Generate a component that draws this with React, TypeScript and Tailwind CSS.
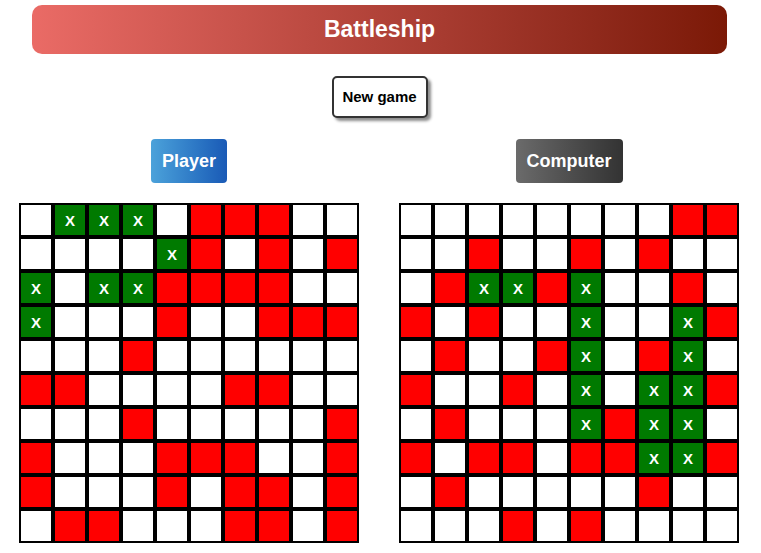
type Cell = "w" | "r" | "x";

const playerBoard: string[] = [
  "wxxxwrrrww",
  "wwwwxrwrwr",
  "xwxxrrrrww",
  "xwwwrwwrrr",
  "wwwrwwwwww",
  "rrwwwwrrww",
  "wwwrwwwwwr",
  "rwwwrrrwwr",
  "rwwwrwrrwr",
  "wrrwwwrrwr",
];

const computerBoard: string[] = [
  "wwwwwwwwrr",
  "wwrwwrwrww",
  "wrxxrxwwrw",
  "rwrwwxwwxr",
  "wrwwrxwrxw",
  "rwwrwxwxxr",
  "wrwwwxrxxw",
  "rwrrwrrxxr",
  "wrwwwwwrww",
  "wwwrwrwwww",
];

function BoardCell({ value }: { value: Cell }) {
  const bg =
    value === "r" ? "bg-[#ff0000]" : value === "x" ? "bg-[#007a00]" : "bg-white";
  return (
    <div
      className={`w-[34px] h-[34px] border-2 border-black flex items-center justify-center text-white font-bold text-[15px] leading-none ${bg}`}
    >
      {value === "x" ? "X" : ""}
    </div>
  );
}

function Board({ rows }: { rows: string[] }) {
  return (
    <div className="grid grid-cols-[repeat(10,34px)] w-[340px]">
      {rows.flatMap((row, r) =>
        row.split("").map((c, i) => <BoardCell key={`${r}-${i}`} value={c as Cell} />)
      )}
    </div>
  );
}

export default function App() {
  return (
    <div className="min-h-[553px] bg-white font-['Liberation_Sans',Arial,sans-serif]">
      <div className="pt-[5px] pl-[32px]">
        <div className="w-[695px] h-[49px] rounded-[10px] bg-gradient-to-r from-[#ea6b66] to-[#7b1906] flex items-center justify-center">
          <h1 className="text-white font-bold text-[23px]">Battleship</h1>
        </div>
      </div>

      <div className="flex justify-center mt-[22px] pr-[2px]">
        <button className="w-[96px] h-[42px] bg-white border-2 border-[#333] rounded-[5px] shadow-[3px_3px_3px_rgba(0,0,0,0.45)] text-black font-bold text-[15px]">
          New game
        </button>
      </div>

      <div className="flex gap-[40px] mt-[21px] pl-[19px]">
        <div className="flex flex-col items-center gap-[20px]">
          <div className="h-[44px] px-[11px] rounded-[4px] bg-gradient-to-r from-[#4ca2da] to-[#1a5ab6] flex items-center text-white font-bold text-[18px]">
            Player
          </div>
          <Board rows={playerBoard} />
        </div>
        <div className="flex flex-col items-center gap-[20px]">
          <div className="h-[44px] px-[11px] rounded-[4px] bg-gradient-to-r from-[#6b6b6b] to-[#333333] flex items-center text-white font-bold text-[18px]">
            Computer
          </div>
          <Board rows={computerBoard} />
        </div>
      </div>
    </div>
  );
}
